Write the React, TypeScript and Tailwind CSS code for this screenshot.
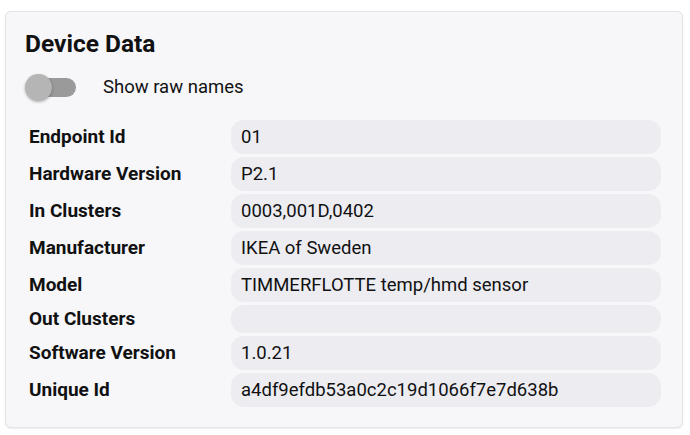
import React, { useState } from 'react';

const rows: [string, string][] = [
  ['Endpoint Id', '01'],
  ['Hardware Version', 'P2.1'],
  ['In Clusters', '0003,001D,0402'],
  ['Manufacturer', 'IKEA of Sweden'],
  ['Model', 'TIMMERFLOTTE temp/hmd sensor'],
  ['Out Clusters', ''],
  ['Software Version', '1.0.21'],
  ['Unique Id', 'a4df9efdb53a0c2c19d1066f7e7d638b'],
];

export default function App() {
  const [raw, setRaw] = useState(false);

  return (
    <div className="w-[690px] h-[435px] bg-white pt-[11px] pl-[5px] font-['Roboto',sans-serif] text-[#111]">
      <div className="w-[678px] h-[417px] rounded-[6px] border border-[#e3e3e8] bg-[#f7f7fa] shadow-[0_1px_2px_rgba(0,0,0,0.08)] px-[19px] pt-[17px]">
        <h2 className="text-[24.5px] leading-[30px] font-bold">Device Data</h2>

        {/* Toggle */}
        <div className="flex items-center mt-[13px] h-[30px]">
          <button
            onClick={() => setRaw(!raw)}
            className="relative w-[52px] h-[30px] shrink-0"
          >
            <span className="absolute left-[13px] top-[6px] w-[38px] h-[19px] rounded-full bg-[#9a9a9a]" />
            <span
              className={
                raw
                  ? 'absolute left-[25px] top-[2px] w-[27px] h-[27px] rounded-full bg-[#03a9f4] shadow-[0_1px_3px_rgba(0,0,0,0.3)]'
                  : 'absolute left-0 top-[2px] w-[27px] h-[27px] rounded-full bg-[#b5b5b5] shadow-[0_1px_3px_rgba(0,0,0,0.3)]'
              }
            />
          </button>
          <span className="ml-[26px] text-[18.5px] leading-[22px]">Show raw names</span>
        </div>

        {/* Data table */}
        <div className="mt-[18px] flex flex-col gap-[3px]">
          {rows.map(([label, value]) => (
            <div key={label} className="flex items-center">
              <div className="w-[206px] pl-[4px] text-[19px] font-bold leading-[22px]">{label}</div>
              <div className="w-[430px] min-h-[28px] rounded-[13px] bg-[#ececf1] px-[10px] py-[6px] text-[18.5px] leading-[22px]">
                {value}
              </div>
            </div>
          ))}
        </div>
      </div>
    </div>
  );
}
